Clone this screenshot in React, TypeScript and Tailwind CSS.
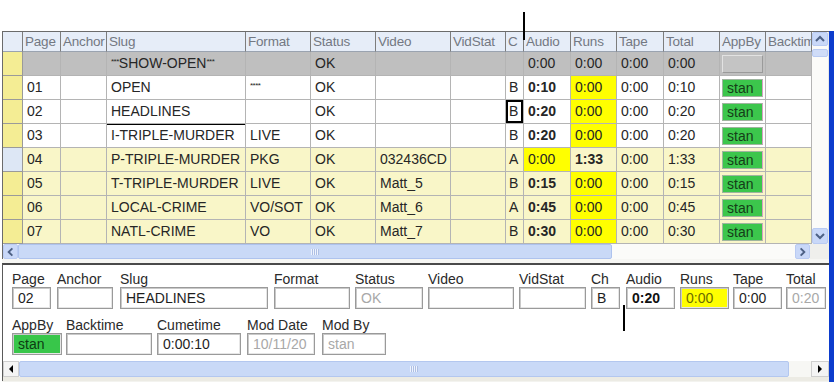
import React from 'react';

const COLS =
  'grid grid-cols-[20px_38px_46px_139px_65px_65px_75px_55px_18px_47px_46px_47px_56px_46px_46px]';

const HEADERS = ['', 'Page', 'Anchor', 'Slug', 'Format', 'Status', 'Video', 'VidStat', 'C', 'Audio', 'Runs', 'Tape', 'Total', 'AppBy', 'Backtime'];

type Row = {
  kind: 'gray' | 'white' | 'yellow';
  hdr: 'yellow' | 'blue';
  page: string;
  slug: React.ReactNode;
  format: React.ReactNode;
  video: string;
  c: string;
  cBox?: boolean;
  slugTop?: boolean;
  audio: string;
  audioBold: boolean;
  audioYellow?: boolean;
  runs: string;
  runsBold?: boolean;
  runsYellow: boolean;
  tape: string;
  total: string;
  appby: 'gray' | 'stan';
};

const Stars = ({ n }: { n: number }) => (
  <span className="relative top-[-4px] text-[8px] tracking-[-0.5px]">{'*'.repeat(n)}</span>
);

const ROWS: Row[] = [
  {
    kind: 'gray', hdr: 'yellow', page: '',
    slug: (<><Stars n={3} />SHOW-OPEN<Stars n={3} /></>),
    format: '', video: '', c: '', audio: '0:00', audioBold: false, runs: '0:00', runsYellow: false,
    tape: '0:00', total: '0:00', appby: 'gray',
  },
  { kind: 'white', hdr: 'yellow', page: '01', slug: 'OPEN', format: <Stars n={4} />, video: '', c: 'B', audio: '0:10', audioBold: true, runs: '0:00', runsYellow: true, tape: '0:00', total: '0:10', appby: 'stan' },
  { kind: 'white', hdr: 'yellow', page: '02', slug: 'HEADLINES', format: '', video: '', c: 'B', cBox: true, audio: '0:20', audioBold: true, runs: '0:00', runsYellow: true, tape: '0:00', total: '0:20', appby: 'stan' },
  { kind: 'white', hdr: 'yellow', page: '03', slug: 'I-TRIPLE-MURDER', slugTop: true, format: 'LIVE', video: '', c: 'B', audio: '0:20', audioBold: true, runs: '0:00', runsYellow: true, tape: '0:00', total: '0:20', appby: 'stan' },
  { kind: 'yellow', hdr: 'blue', page: '04', slug: 'P-TRIPLE-MURDER', format: 'PKG', video: '032436CD', c: 'A', audio: '0:00', audioBold: false, audioYellow: true, runs: '1:33', runsBold: true, runsYellow: false, tape: '0:00', total: '1:33', appby: 'stan' },
  { kind: 'yellow', hdr: 'yellow', page: '05', slug: 'T-TRIPLE-MURDER', format: 'LIVE', video: 'Matt_5', c: 'B', audio: '0:15', audioBold: true, runs: '0:00', runsYellow: true, tape: '0:00', total: '0:15', appby: 'stan' },
  { kind: 'yellow', hdr: 'yellow', page: '06', slug: 'LOCAL-CRIME', format: 'VO/SOT', video: 'Matt_6', c: 'A', audio: '0:45', audioBold: true, runs: '0:00', runsYellow: true, tape: '0:00', total: '0:45', appby: 'stan' },
  { kind: 'yellow', hdr: 'yellow', page: '07', slug: 'NATL-CRIME', format: 'VO', video: 'Matt_7', c: 'B', audio: '0:30', audioBold: true, runs: '0:00', runsYellow: true, tape: '0:00', total: '0:30', appby: 'stan' },
];

const rowBg = (k: Row['kind']) =>
  k === 'gray' ? 'bg-[#bfbfbf]' : k === 'yellow' ? 'bg-[#f9f6c8]' : 'bg-white';

function Cell({ children, className = '' }: { children?: React.ReactNode; className?: string }) {
  return (
    <div
      className={`h-[24px] overflow-hidden whitespace-nowrap border-r border-b border-[#b4b4b4] pl-[4px] text-[14px] leading-[23px] text-[#262626] ${className}`}
    >
      {children}
    </div>
  );
}

function Chevron({ dir }: { dir: 'up' | 'down' | 'left' | 'right' }) {
  const pts =
    dir === 'up' ? '3,9 7,5 11,9' : dir === 'down' ? '3,5 7,9 11,5' : dir === 'left' ? '9,3 5,7 9,11' : '5,3 9,7 5,11';
  return (
    <svg width="14" height="14" viewBox="0 0 14 14">
      <polyline points={pts} fill="none" stroke="#4d6185" strokeWidth="2" />
    </svg>
  );
}

function XpButton({ dir, className = '' }: { dir: 'up' | 'down' | 'left' | 'right'; className?: string }) {
  return (
    <div
      className={`flex items-center justify-center rounded-[2px] border border-[#b9cbf3] bg-[#c9d8f8] ${className}`}
    >
      <Chevron dir={dir} />
    </div>
  );
}

function Triangle({ dir }: { dir: 'left' | 'right' }) {
  return (
    <svg width="6" height="8" viewBox="0 0 6 8">
      <polygon points={dir === 'left' ? '5,0 1,4 5,8' : '1,0 5,4 1,8'} fill="#000" />
    </svg>
  );
}

type Field = {
  label: string;
  outer: string;
  inner: string;
  value?: string;
  tone?: 'normal' | 'disabled' | 'bold' | 'yellow' | 'green';
};

const FIELDS1: Field[] = [
  { label: 'Page', outer: 'w-[45px]', inner: 'w-[39px]', value: '02' },
  { label: 'Anchor', outer: 'w-[63px]', inner: 'w-[56px]' },
  { label: 'Slug', outer: 'w-[154px]', inner: 'w-[148px]', value: 'HEADLINES' },
  { label: 'Format', outer: 'w-[81px]', inner: 'w-[76px]' },
  { label: 'Status', outer: 'w-[73px]', inner: 'w-[68px]', value: 'OK', tone: 'disabled' },
  { label: 'Video', outer: 'w-[91px]', inner: 'w-[86px]' },
  { label: 'VidStat', outer: 'w-[72px]', inner: 'w-[67px]' },
  { label: 'Ch', outer: 'w-[35px]', inner: 'w-[29px]', value: 'B' },
  { label: 'Audio', outer: 'w-[54px]', inner: 'w-[49px]', value: '0:20', tone: 'bold' },
  { label: 'Runs', outer: 'w-[53px]', inner: 'w-[49px]', value: '0:00', tone: 'yellow' },
  { label: 'Tape', outer: 'w-[53px]', inner: 'w-[49px]', value: '0:00' },
  { label: 'Total', outer: 'w-[45px]', inner: 'w-[40px]', value: '0:20', tone: 'disabled' },
];

const FIELDS2: Field[] = [
  { label: 'AppBy', outer: 'w-[54px]', inner: 'w-[50px]', value: 'stan', tone: 'green' },
  { label: 'Backtime', outer: 'w-[91px]', inner: 'w-[86px]' },
  { label: 'Cumetime', outer: 'w-[90px]', inner: 'w-[84px]', value: '0:00:10' },
  { label: 'Mod Date', outer: 'w-[75px]', inner: 'w-[68px]', value: '10/11/20', tone: 'disabled' },
  { label: 'Mod By', outer: 'w-[70px]', inner: 'w-[64px]', value: 'stan', tone: 'disabled' },
];

function FormField({ f }: { f: Field }) {
  const tone =
    f.tone === 'disabled'
      ? 'bg-white text-[#a8a8a8]'
      : f.tone === 'bold'
        ? 'bg-white font-bold text-[#111]'
        : f.tone === 'yellow'
          ? 'bg-[#ffff00] text-[#6b6b00]'
          : f.tone === 'green'
            ? 'bg-[#38c64a] text-[#0d3b12] border-[#2d8f38]'
            : 'bg-white text-[#1e1e1e]';
  return (
    <div className={`flex shrink-0 flex-col ${f.outer}`}>
      <div className="h-[16px] whitespace-nowrap text-[14px] leading-[16px] text-[#2a2a2a]">{f.label}</div>
      <div
        className={`h-[22px] overflow-hidden whitespace-nowrap border border-[#9a9a9a] pl-[5px] text-[14px] leading-[20px] shadow-[inset_1px_1px_0_#c9c9c9,inset_-1px_-1px_0_#e6e6e6] ${f.inner} ${tone}`}
      >
        {f.value}
      </div>
    </div>
  );
}

export default function App() {
  return (
    <div className="relative h-[382px] w-[834px] overflow-hidden bg-white font-['Liberation_Sans',Arial,sans-serif]">
      <div className="h-[31px]" />
      <div className="flex h-[351px]">
        <div className="w-[2px] bg-white" />
        <div className="flex w-[827px] flex-col bg-[#f3f3ef]">
          {/* Grid block */}
          <div className="flex flex-col border-l border-t border-[#6b6b6b] bg-white">
            <div className="flex">
              <div className="w-[809px]">
                <div className={COLS}>
                  {HEADERS.map((h, i) => (
                    <div
                      key={i}
                      className="h-[20px] overflow-hidden whitespace-nowrap border-r border-b border-r-[#7d7d7d] border-b-[#9aa3b0] bg-[#e6edf8] pl-[2px] text-[13.5px] leading-[20px] tracking-[-0.2px] text-[#737882]"
                    >
                      {h}
                    </div>
                  ))}
                </div>
                {ROWS.map((r, ri) => (
                  <div key={ri} className={COLS}>
                    <div
                      className={`h-[24px] border-r border-b border-[#9a9a9a] ${r.hdr === 'blue' ? 'bg-[#dde7f5]' : 'bg-[#f4ed94]'}`}
                    />
                    <Cell className={rowBg(r.kind)}>{r.page}</Cell>
                    <Cell className={rowBg(r.kind)} />
                    <Cell className={`${rowBg(r.kind)} ${r.slugTop ? 'shadow-[inset_0_1px_0_#000]' : ''}`}>{r.slug}</Cell>
                    <Cell className={rowBg(r.kind)}>{r.format}</Cell>
                    <Cell className={rowBg(r.kind)}>OK</Cell>
                    <Cell className={rowBg(r.kind)}>{r.video}</Cell>
                    <Cell className={rowBg(r.kind)} />
                    <Cell className={`${rowBg(r.kind)} !pl-[3px] ${r.cBox ? 'shadow-[inset_0_0_0_2px_#000]' : ''}`}>{r.c}</Cell>
                    <Cell className={`${r.audioYellow ? 'bg-[#ffff00]' : rowBg(r.kind)} ${r.audioBold ? 'font-bold' : ''}`}>
                      {r.audio}
                    </Cell>
                    <Cell className={`${r.runsYellow ? 'bg-[#ffff00]' : rowBg(r.kind)} ${r.runsBold ? 'font-bold' : ''}`}>
                      {r.runs}
                    </Cell>
                    <Cell className={rowBg(r.kind)}>{r.tape}</Cell>
                    <Cell className={rowBg(r.kind)}>{r.total}</Cell>
                    <div className={`h-[24px] border-r border-b border-[#b4b4b4] px-[2px] pt-[3px] pb-[2px] ${rowBg(r.kind)}`}>
                      {r.appby === 'stan' ? (
                        <div className="h-[18px] border border-[#9fb59f] border-r-[#d6a0c4] bg-[#3cc64c] pl-[4px] text-[14px] leading-[17px] text-[#153d18]">
                          stan
                        </div>
                      ) : (
                        <div className="h-[18px] border border-[#e2e2e2] border-r-[#9a9a9a] border-b-[#9a9a9a] bg-[#c4c4c4]" />
                      )}
                    </div>
                    <Cell className={rowBg(r.kind)} />
                  </div>
                ))}
              </div>
              {/* vertical scrollbar */}
              <div className="flex w-[16px] flex-col bg-[#fbfbf9]">
                <XpButton dir="up" className="h-[14px] w-[16px]" />
                <div className="mt-[3px] h-[8px] w-[16px] rounded-[2px] border border-[#b9cbf3] bg-[#cfdcf8]" />
                <div className="flex-1" />
                <XpButton dir="down" className="h-[16px] w-[16px]" />
              </div>
              <div className="w-[1px] bg-[#e8e8e8]" />
            </div>
            {/* horizontal scrollbar */}
            <div className="flex h-[15px] bg-[#fbfbf9]">
              <XpButton dir="left" className="h-[15px] w-[15px]" />
              <div className="flex h-[15px] w-[594px] items-center justify-center rounded-[2px] border border-[#aec3ee] bg-[#c9d9f7]">
                <div className="h-[6px] w-[8px] bg-[repeating-linear-gradient(90deg,#eef3fd_0_1px,#aebfe4_1px_2px)]" />
              </div>
              <div className="flex-1" />
              <XpButton dir="right" className="h-[15px] w-[15px]" />
              <div className="w-[19px] bg-[#efefec]" />
            </div>
          </div>
          <div className="h-[4px] bg-[#f6f6f3]" />
          {/* Form panel */}
          <div className="flex flex-col border-l border-t-2 border-l-[#5a5a5a] border-t-[#4a4a4a] bg-white">
            <div className="h-[96px] pl-[9px] pt-[6px]">
              <div className="flex">
                {FIELDS1.map((f) => (
                  <FormField key={f.label} f={f} />
                ))}
              </div>
              <div className="mt-[8px] flex">
                {FIELDS2.map((f) => (
                  <FormField key={f.label} f={f} />
                ))}
              </div>
            </div>
            <div className="flex h-[16px] bg-[#f7f7f4]">
              <div className="flex h-[16px] w-[16px] items-center justify-center border border-[#cfcfcf] bg-[#f4f4f4]">
                <Triangle dir="left" />
              </div>
              <div className="flex h-[16px] w-[770px] items-center justify-end rounded-[2px] border border-[#b3c7ef] bg-[#c9d9f7] pr-[370px]">
                <div className="h-[6px] w-[8px] bg-[repeating-linear-gradient(90deg,#eef3fd_0_1px,#aebfe4_1px_2px)]" />
              </div>
              <div className="flex-1" />
              <div className="flex h-[16px] w-[18px] items-center justify-center border border-[#cfcfcf] bg-[#f4f4f4]">
                <Triangle dir="right" />
              </div>
            </div>
            <div className="h-[4px] bg-[#ecebe4]" />
          </div>
        </div>
        <div className="w-[5px] bg-[#0c3ccd]" />
      </div>

      {/* cursor marks */}
      <div className="absolute left-[523px] top-[12px] h-[28px] w-[2px] bg-black" />
      <div className="absolute left-[623px] top-[305px] h-[26px] w-[2px] bg-black" />
    </div>
  );
}
